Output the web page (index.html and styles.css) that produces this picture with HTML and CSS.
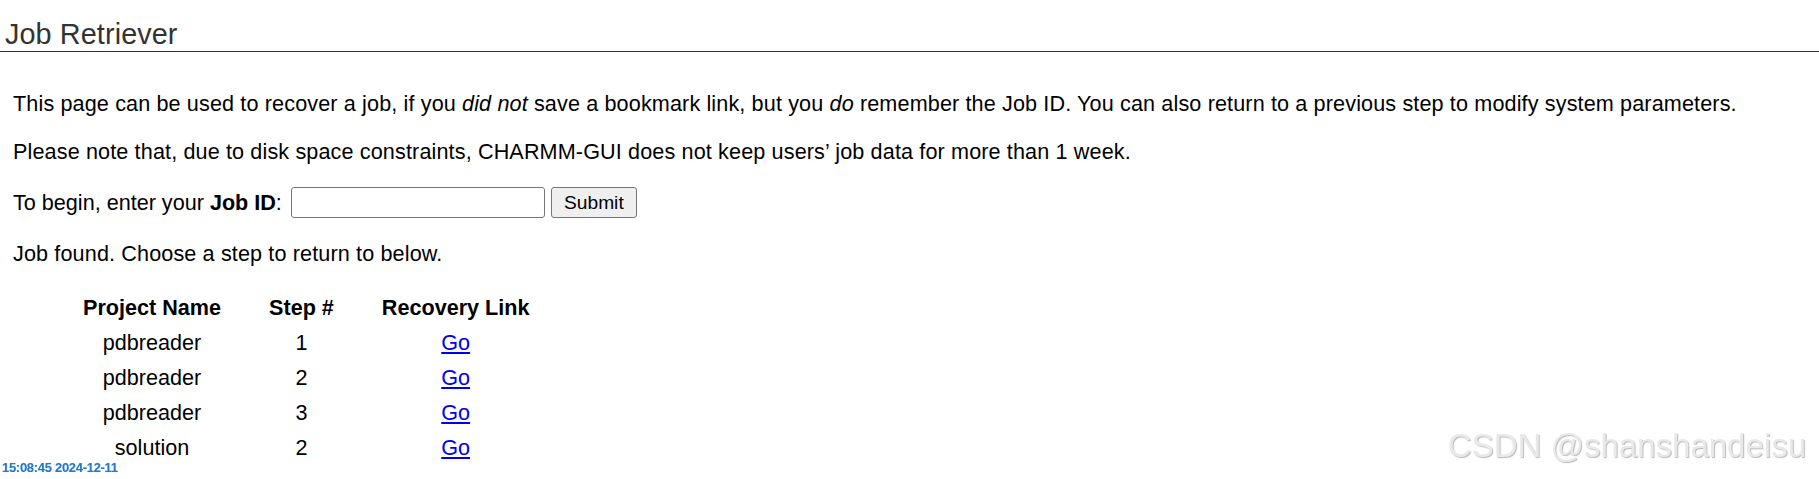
FILE: index.html
```html
<!DOCTYPE html>
<html lang="en">
<head>
<meta charset="utf-8">
<title>Job Retriever</title>
<link rel="stylesheet" href="styles.css">
</head>
<body>
<h2 class="title">Job Retriever</h2>
<div class="content">
  <p class="para">This page can be used to recover a job, if you <em>did not</em> save a bookmark link, but you <em>do</em> remember the Job ID. You can also return to a previous step to modify system parameters.</p>
  <p class="para">Please note that, due to disk space constraints, CHARMM-GUI does not keep users’ job data for more than 1 week.</p>
  <form class="job-form">
    <span class="label">To begin, enter your <b>Job ID</b>:</span>
    <input class="job-input" type="text" name="jobid">
    <button class="submit-btn" type="button">Submit</button>
  </form>
  <p class="para">Job found. Choose a step to return to below.</p>
  <table class="steps">
    <thead>
      <tr><th>Project Name</th><th>Step #</th><th>Recovery Link</th></tr>
    </thead>
    <tbody>
      <tr><td>pdbreader</td><td>1</td><td><a href="#">Go</a></td></tr>
      <tr><td>pdbreader</td><td>2</td><td><a href="#">Go</a></td></tr>
      <tr><td>pdbreader</td><td>3</td><td><a href="#">Go</a></td></tr>
      <tr><td>solution</td><td>2</td><td><a href="#">Go</a></td></tr>
    </tbody>
  </table>
</div>
<div class="clock">15:08:45 2024-12-11</div>
<div class="watermark">CSDN @shanshandeisu</div>
</body>
</html>
```
FILE: styles.css
```css
html, body {
  margin: 0;
  padding: 0;
  background: #fff;
}

body {
  font-family: "Liberation Sans", Arial, sans-serif;
  font-size: 21.6px;
  line-height: 25px;
  color: #000;
}

.title {
  margin: 18px 0 0;
  padding-left: 5px;
  font-size: 28.8px;
  font-weight: normal;
  line-height: 33px;
  letter-spacing: 0.1px;
  color: #333;
  border-bottom: 1px solid #333;
}

.content {
  display: flex;
  flex-direction: column;
  align-items: flex-start;
  gap: 23px;
  padding: 39px 13px 0;
}

.para {
  margin: 0;
  letter-spacing: 0.13px;
}

.job-form {
  display: flex;
  align-items: center;
  margin: 0;
}

.label b {
  font-weight: bold;
}

.job-input {
  box-sizing: border-box;
  width: 254px;
  height: 31px;
  margin: 0 0 0 9px;
  border: 1px solid #767676;
  border-radius: 3px;
  background: #fff;
  font-family: "Liberation Sans", Arial, sans-serif;
  font-size: 19.2px;
  padding: 1px 3px;
}

.submit-btn {
  box-sizing: border-box;
  width: 86px;
  height: 31px;
  margin: 0 0 0 6px;
  border: 1px solid #767676;
  border-radius: 3px;
  background: #efefef;
  color: #000;
  font-family: "Liberation Sans", Arial, sans-serif;
  font-size: 19.2px;
  padding: 0;
}

.steps {
  margin-left: 45px;
  border-collapse: separate;
  border-spacing: 2px;
  font-size: 21.6px;
  line-height: 25px;
}

.steps th,
.steps td {
  padding: 4px 23px;
  text-align: center;
}

.steps th {
  font-weight: bold;
}

.steps a {
  color: #0000ee;
  text-decoration: underline;
}

.clock {
  position: fixed;
  left: 2px;
  bottom: 4px;
  font-family: "Liberation Sans", Arial, sans-serif;
  font-size: 13px;
  line-height: 15px;
  font-weight: bold;
  letter-spacing: -0.3px;
  color: #2a78c6;
  text-shadow: 0 0 1px #9fd0f5;
}

.watermark {
  position: fixed;
  right: 13px;
  bottom: 14px;
  font-family: "Liberation Sans", Arial, sans-serif;
  font-size: 33px;
  line-height: 38px;
  color: #e9e9e9;
  text-shadow: 1px 1px 1px rgba(0, 0, 0, 0.28), -1px -1px 0 rgba(255, 255, 255, 0.9);
}
```
